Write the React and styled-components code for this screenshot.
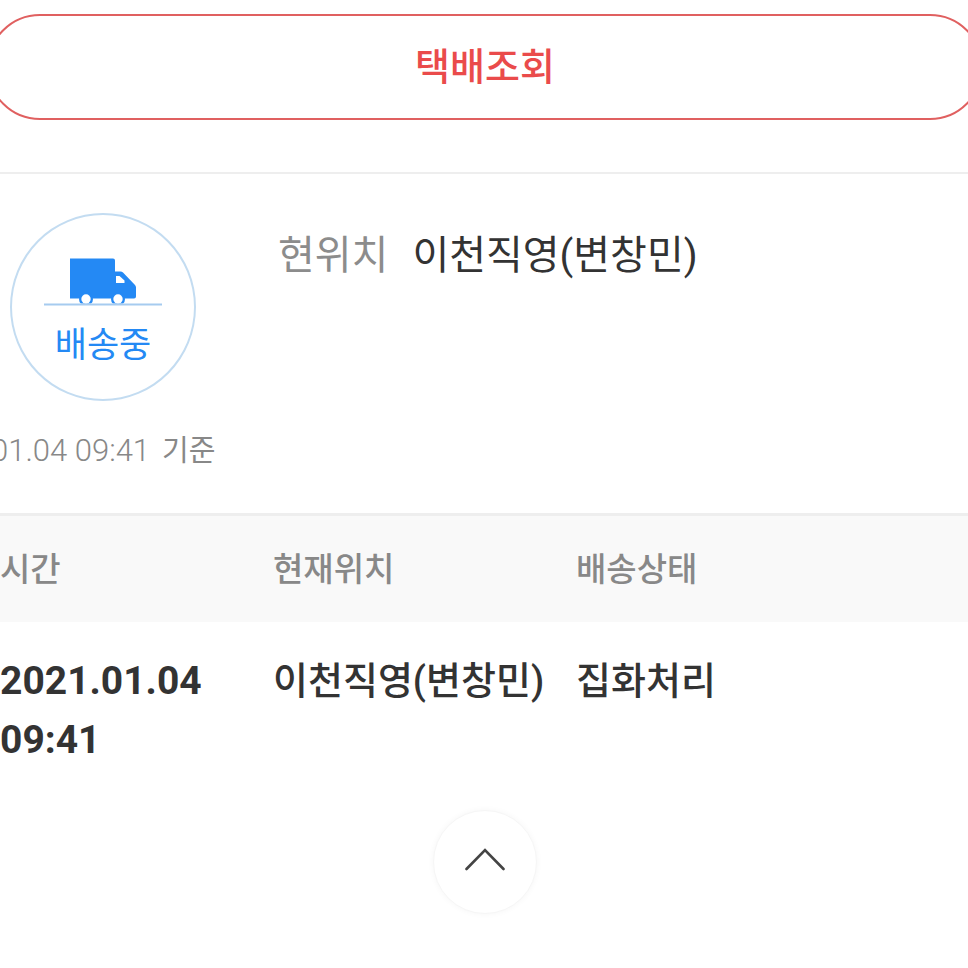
import styled, { createGlobalStyle } from "styled-components";

function App() {
  return (
    <Page>
      <GlobalStyle />
      <SearchButton type="button">택배조회</SearchButton>
      <Summary>
        <StatusColumn>
          <StatusCircle>
            <TruckIcon />
            <StatusText>배송중</StatusText>
          </StatusCircle>
          <Updated>
            <time>01.04 09:41</time>
            <UpdatedNote>기준</UpdatedNote>
          </Updated>
        </StatusColumn>
        <Location>
          <LocationLabel>현위치</LocationLabel>
          <LocationName>이천직영(변창민)</LocationName>
        </Location>
      </Summary>
      <Table>
        <colgroup>
          <Col $width="273px" />
          <Col $width="303px" />
          <Col />
        </colgroup>
        <thead>
          <tr>
            <Th scope="col">시간</Th>
            <Th scope="col">현재위치</Th>
            <Th scope="col">배송상태</Th>
          </tr>
        </thead>
        <tbody>
          <tr>
            <Td $date>
              2021.01.04
              <br />
              09:41
            </Td>
            <Td>이천직영(변창민)</Td>
            <Td>집화처리</Td>
          </tr>
        </tbody>
      </Table>
      <TopButton type="button" aria-label="맨 위로">
        <ChevronIcon />
      </TopButton>
    </Page>
  );
}
export default App;

function TruckIcon() {
  return (
    <Truck viewBox="0 0 118 48" aria-hidden="true">
      <path
        d="M26 0.500h43q2 0 2 2v11h5.500q1.500 0 2.500 1l12 12.500q1 1 1 2.500v9q0 2-2 2H26z"
        fill="#2489f4"
      />
      <path d="M72 18h3.500l5 4.500V25H72z" fill="#fff" />
      <circle cx="42" cy="41" r="7" fill="#2489f4" />
      <circle cx="74" cy="41" r="7" fill="#2489f4" />
      <circle cx="42" cy="41" r="4.700" fill="#fff" />
      <circle cx="74" cy="41" r="4.700" fill="#fff" />
      <rect y="45.500" width="118" height="3" fill="#fff" />
      <rect y="45.500" width="118" height="2" fill="#a6cbef" />
    </Truck>
  );
}

function ChevronIcon() {
  return (
    <Chevron viewBox="0 0 40 24" aria-hidden="true">
      <path
        d="M1.500 22 20 3l18.500 19"
        fill="none"
        stroke="#444"
        strokeWidth="2.600"
        strokeLinecap="round"
      />
    </Chevron>
  );
}

const GlobalStyle = createGlobalStyle`
  body {
    margin: 0;
    overflow-x: hidden;
    background: #fff;
    font-family: Roboto, "Noto Sans CJK KR", sans-serif;
  }
  button {
    font-family: inherit;
    cursor: pointer;
  }
`;
//===========================//
const Page = styled.main`
  display: flex;
  flex-direction: column;
  padding-top: 14px;
  overflow: hidden;
`;
const SearchButton = styled.button`
  height: 106px;
  margin: 0 -15px 0 -13px;
  padding: 0 0 8px;
  border: 2px solid #e06060;
  border-radius: 53px;
  background: #fff;
  color: #ea4b4b;
  font-size: 38px;
  font-weight: 500;
`;
const Summary = styled.section`
  display: flex;
  margin-top: 52px;
  padding: 39px 0 42px;
  border-top: 2px solid #eee;
`;
const StatusColumn = styled.div`
  display: flex;
  flex-direction: column;
  width: 278px;
`;
const StatusCircle = styled.div`
  display: flex;
  flex-direction: column;
  align-items: center;
  box-sizing: border-box;
  width: 186px;
  height: 188px;
  margin-left: 10px;
  padding-top: 43px;
  border: 2px solid #c3dcf1;
  border-radius: 50%;
`;
const Truck = styled.svg`
  width: 118px;
  height: 48px;
`;
const StatusText = styled.strong`
  margin-top: 16px;
  color: #2489f4;
  font-size: 35px;
  font-weight: 400;
  line-height: 48px;
`;
const Updated = styled.p`
  display: flex;
  align-items: baseline;
  gap: 12px;
  margin: 30px 0 0 -9px;
  color: #888;
  font-size: 31px;
  font-weight: 300;
  line-height: 40px;
  white-space: nowrap;
`;
const UpdatedNote = styled.span`
  font-size: 29px;
  font-weight: 400;
`;
const Location = styled.div`
  display: flex;
  gap: 24px;
  margin-top: 15px;
  font-size: 40px;
  line-height: 56px;
`;
const LocationLabel = styled.span`
  color: #8c8c8c;
`;
const LocationName = styled.span`
  color: #333;
`;
const Table = styled.table`
  width: 100%;
  border-collapse: collapse;
  table-layout: fixed;
  text-align: left;
`;
const Col = styled.col`
  width: ${(props) => props.$width || "auto"};
`;
const Th = styled.th`
  box-sizing: border-box;
  height: 107px;
  padding: 0 0 4px;
  border-top: 3px solid #eee;
  background: #f9f9f9;
  color: #888;
  font-size: 33px;
  font-weight: 500;
`;
const Td = styled.td`
  padding: 30px 0 0;
  color: #333;
  font-size: ${(props) => (props.$date ? "39px" : "38px")};
  font-weight: ${(props) => (props.$date ? 700 : 500)};
  line-height: 59px;
  vertical-align: top;
  white-space: nowrap;
`;
const TopButton = styled.button`
  display: flex;
  align-items: flex-start;
  justify-content: center;
  align-self: center;
  width: 104px;
  height: 104px;
  margin: 40px 0 50px 2px;
  padding: 36px 0 0;
  border: 1px solid #f6f6f6;
  border-radius: 50%;
  background: #fff;
  box-shadow: 0 0 6px #0000000a;
`;
const Chevron = styled.svg`
  width: 40px;
  height: 24px;
`;
